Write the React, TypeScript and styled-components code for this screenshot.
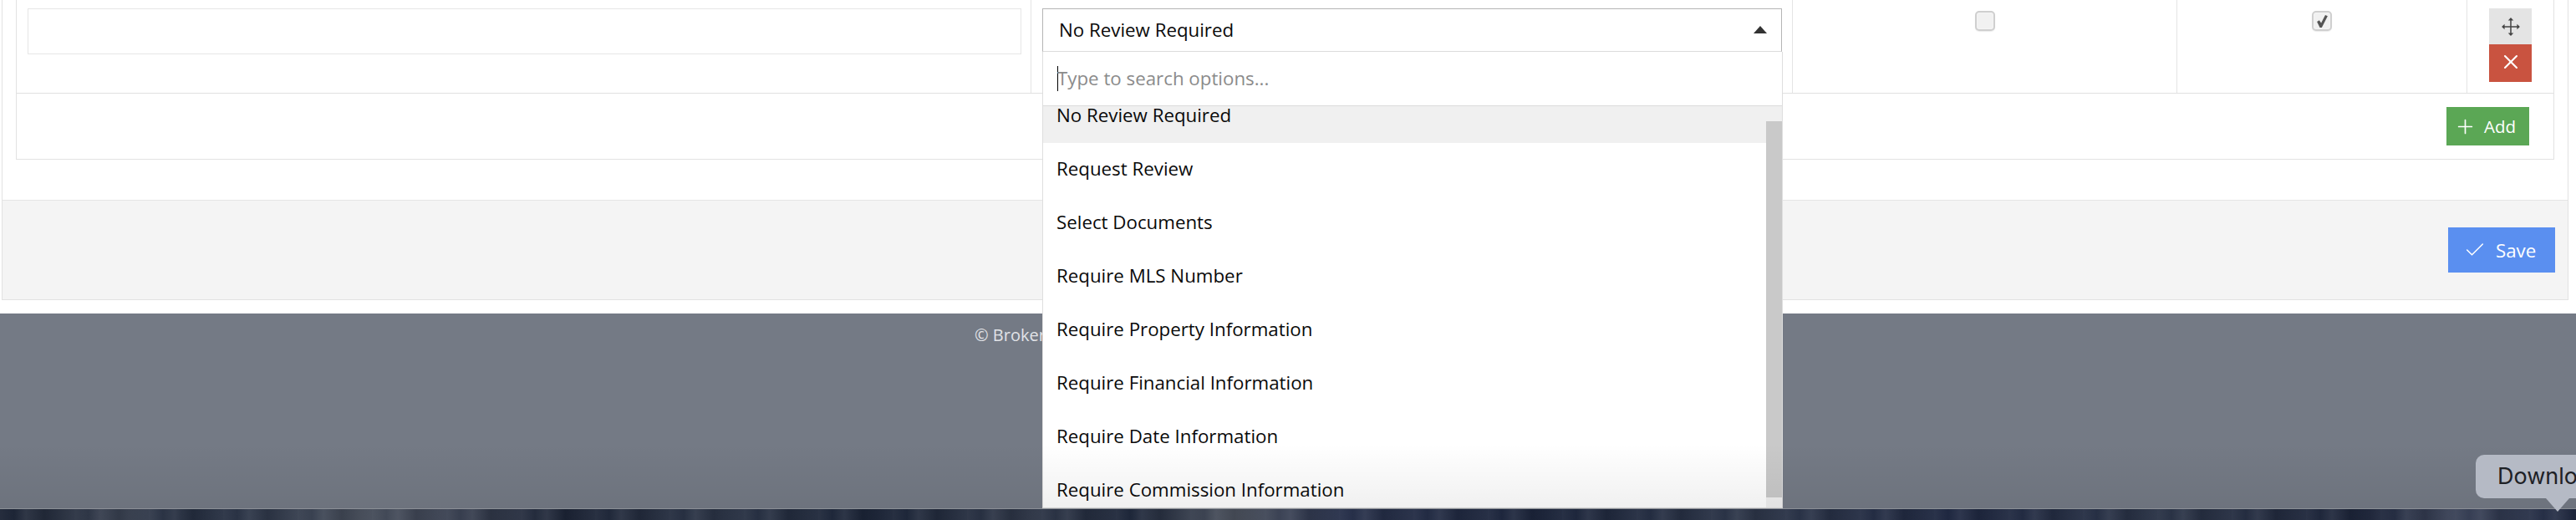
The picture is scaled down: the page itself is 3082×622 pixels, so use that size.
import styled, { createGlobalStyle } from 'styled-components';
import { Check, Plus, X } from 'lucide-react';

const GlobalStyle = createGlobalStyle`
  html, body {
    margin: 0;
    padding: 0;
    background: #fff;
  }
  body {
    font-family: "Open Sans", "Liberation Sans", sans-serif;
    color: #0a0a0a;
  }
  * {
    box-sizing: border-box;
  }
`;

const Page = styled.div`
  position: relative;
  display: flex;
  flex-direction: column;
  width: 3082px;
  height: 622px;
  overflow: hidden;
`;

const Panel = styled.section`
  width: 3071px;
  margin-left: 2px;
  border: 1px solid #e2e2e2;
  border-top: none;
`;

const PanelBody = styled.div`
  padding: 0 16px 48px;
`;

const TableFrame = styled.div`
  border: 1px solid #e2e2e2;
  border-top: none;
`;

const Row = styled.div`
  display: grid;
  grid-template-columns: 1214px 911px 460px 347px 103px;
  height: 112px;
  border-bottom: 1px solid #e0e0e0;
`;

const Cell = styled.div`
  position: relative;
  border-right: 1px solid #e4e4e4;
  &:last-child {
    border-right: none;
  }
`;

const NameCell = styled(Cell)`
  padding: 10px 11px 0 13px;
`;

const SelectCell = styled(Cell)`
  padding: 10px 12px 0 13px;
`;

const CheckCell = styled(Cell)`
  display: flex;
  justify-content: center;
  padding-top: 13px;
`;

const ActionCell = styled(Cell)`
  display: flex;
  flex-direction: column;
  align-items: center;
  padding-top: 10px;
`;

const NameInput = styled.input`
  display: block;
  width: 100%;
  height: 55px;
  border: 1px solid #e6e6e6;
  background: #fff;
  outline: none;
`;

const SelectBox = styled.div`
  display: flex;
  align-items: center;
  justify-content: space-between;
  height: 52px;
  padding: 0 17px 2px 19px;
  border: 1px solid #b5b5b5;
  border-bottom-color: #dcdcdc;
  font-size: 22.3px;
`;

const CaretUp = styled.span`
  width: 0;
  height: 0;
  border-left: 8px solid transparent;
  border-right: 8px solid transparent;
  border-bottom: 9px solid #333;
`;

const Dropdown = styled.div`
  position: absolute;
  z-index: 5;
  top: 62px;
  left: 13px;
  display: flex;
  flex-direction: column;
  width: 886px;
  height: 546px;
  border: 1px solid #dedede;
  border-top: none;
  background: #fff;
`;

const SearchRow = styled.div`
  flex: none;
  display: flex;
  align-items: center;
  height: 65px;
  padding: 0 0 0 17px;
  border-bottom: 1px solid #dcdcdc;
`;

const TextCaret = styled.span`
  width: 1px;
  height: 30px;
  margin-right: -1px;
  background: #000;
`;

const SearchInput = styled.input`
  flex: 1;
  margin-top: -2px;
  border: none;
  outline: none;
  padding: 0;
  font-family: inherit;
  font-size: 22.3px;
  background: transparent;
  &::placeholder {
    color: #8b8b8b;
    opacity: 1;
  }
`;

const OptionViewport = styled.div`
  position: relative;
  flex: 1;
  overflow: hidden;
`;

const OptionList = styled.ul`
  list-style: none;
  margin: -20px 0 0;
  padding: 0;
`;

const Option = styled.li<{ $active?: boolean }>`
  display: flex;
  align-items: center;
  height: 64px;
  padding: 0 0 3px 16px;
  font-size: 22.3px;
  background: ${(p) => (p.$active ? '#f0f0f0' : 'transparent')};
`;

const ScrollTrack = styled.div`
  position: absolute;
  top: 0;
  right: 0;
  bottom: 0;
  width: 19px;
  padding-top: 18px;
  background: #f0f0f0;
`;

const ScrollThumb = styled.div`
  height: 450px;
  background: #c9c9c9;
`;

const CheckBox = styled.span`
  display: flex;
  align-items: center;
  justify-content: center;
  width: 24px;
  height: 24px;
  border: 2px solid #cfcfcf;
  border-radius: 5px;
  background: #f1f1f1;
  box-shadow: 0 1px 1px rgba(0, 0, 0, 0.08), inset 0 0 2px #fff;
  color: #555;
`;

const MoveButton = styled.button`
  display: flex;
  align-items: center;
  justify-content: center;
  width: 51px;
  height: 43px;
  border: none;
  padding: 0;
  background: #e4e4e4;
  color: #444;
`;

const DeleteButton = styled(MoveButton)`
  height: 45px;
  padding-bottom: 3px;
  background: #c95340;
  color: #fff;
`;

const AddRow = styled.div`
  display: flex;
  justify-content: flex-end;
  height: 78px;
  padding: 16px 29px 0 0;
`;

const AddButton = styled.button`
  display: flex;
  align-items: center;
  gap: 9px;
  width: 99px;
  height: 46px;
  padding: 0 0 0 9px;
  border: none;
  background: #5ba755;
  color: #fff;
  font-family: inherit;
  font-size: 20.5px;
`;

const PanelFooter = styled.div`
  display: flex;
  justify-content: flex-end;
  height: 119px;
  padding: 32px 15px 0 0;
  border-top: 1px solid #e5e5e5;
  background: #f4f4f4;
`;

const SaveButton = styled.button`
  display: flex;
  align-items: center;
  gap: 11px;
  width: 128px;
  height: 54px;
  padding: 0 0 0 18px;
  border: none;
  background: #5a8ff0;
  color: #fff;
  font-family: inherit;
  font-size: 22.3px;
`;

const SiteFooter = styled.footer`
  flex: none;
  height: 233px;
  margin-top: 16px;
  padding: 12px 0 0 1166px;
  background: #747a85;
  color: #e1e3e7;
  font-size: 20px;
  white-space: nowrap;
`;

const DesktopBand = styled.div`
  flex: 1;
  border-top: 1px solid #8b8f96;
  background:
    repeating-linear-gradient(
      90deg,
      rgba(255, 255, 255, 0.05) 0,
      rgba(255, 255, 255, 0) 17px,
      rgba(255, 255, 255, 0.07) 31px,
      rgba(0, 0, 0, 0.1) 53px,
      rgba(255, 255, 255, 0.04) 89px
    ),
    linear-gradient(
      90deg,
      #1a2233 0,
      #2b3343 3%,
      #3a4252 5%,
      #232c3e 7%,
      #2c3547 10%,
      #454c59 14%,
      #3d4454 17%,
      #1c2436 22%,
      #2a3345 28%,
      #1a2336 34%,
      #2e3647 40%,
      #1d2639 44%,
      #4a505c 48%,
      #27304a 52%,
      #1b243a 60%,
      #2c3548 68%,
      #1e2740 76%,
      #2a3346 84%,
      #1b2338 92%,
      #3b4358 95%,
      #1f2840 100%
    );
`;

const DockShade = styled.div`
  position: absolute;
  z-index: 6;
  left: 0;
  right: 0;
  top: 530px;
  height: 78px;
  background: linear-gradient(180deg, rgba(0, 0, 0, 0), rgba(0, 0, 0, 0.06));
  pointer-events: none;
`;

const DockTooltip = styled.div`
  position: absolute;
  z-index: 7;
  top: 544px;
  left: 2962px;
  display: flex;
  align-items: center;
  width: 200px;
  height: 52px;
  padding: 0 0 2px 26px;
  border-radius: 10px;
  background: #b5bac5;
  color: #1e2126;
  font-family: Inter, "Liberation Sans", sans-serif;
  font-size: 27px;
  white-space: nowrap;
  &::after {
    content: '';
    position: absolute;
    top: 52px;
    left: 84px;
    width: 28px;
    height: 16px;
    background: #b5bac5;
    clip-path: polygon(0 0, 100% 0, 50% 100%);
  }
`;

const reviewOptions = [
  'No Review Required',
  'Request Review',
  'Select Documents',
  'Require MLS Number',
  'Require Property Information',
  'Require Financial Information',
  'Require Date Information',
  'Require Commission Information',
];

function MoveIcon() {
  return (
    <svg width="24" height="24" viewBox="0 0 22 22" fill="currentColor">
      <path d="M10.3 3h1.4v16h-1.4zM3 10.3h16v1.4H3z" />
      <path d="M11 1l3 3.2H8zM11 21l3-3.2H8zM1 11l3.2-3v6zM21 11l-3.2-3v6z" />
    </svg>
  );
}

function TickIcon() {
  return (
    <svg width="17" height="17" viewBox="0 0 16 16" fill="currentColor">
      <path d="M2 8.5 4.5 6.8 6.7 9.8 11.3 1 14 2.2 7.4 15 5.2 15z" />
    </svg>
  );
}

function App() {
  return (
    <Page>
      <GlobalStyle />
      <Panel>
        <PanelBody>
          <TableFrame>
            <Row>
              <NameCell>
                <NameInput readOnly />
              </NameCell>
              <SelectCell>
                <SelectBox>
                  No Review Required
                  <CaretUp />
                </SelectBox>
                <Dropdown>
                  <SearchRow>
                    <TextCaret />
                    <SearchInput placeholder="Type to search options..." readOnly />
                  </SearchRow>
                  <OptionViewport>
                    <OptionList>
                      {reviewOptions.map((option, index) => (
                        <Option key={option} $active={index === 0}>
                          {option}
                        </Option>
                      ))}
                    </OptionList>
                    <ScrollTrack>
                      <ScrollThumb />
                    </ScrollTrack>
                  </OptionViewport>
                </Dropdown>
              </SelectCell>
              <CheckCell>
                <CheckBox />
              </CheckCell>
              <CheckCell>
                <CheckBox>
                  <TickIcon />
                </CheckBox>
              </CheckCell>
              <ActionCell>
                <MoveButton>
                  <MoveIcon />
                </MoveButton>
                <DeleteButton>
                  <X size={28} strokeWidth={1.8} />
                </DeleteButton>
              </ActionCell>
            </Row>
            <AddRow>
              <AddButton>
                <Plus size={27} strokeWidth={1.5} />
                Add
              </AddButton>
            </AddRow>
          </TableFrame>
        </PanelBody>
        <PanelFooter>
          <SaveButton>
            <Check size={28} strokeWidth={1.3} />
            Save
          </SaveButton>
        </PanelFooter>
      </Panel>
      <SiteFooter>© Broker</SiteFooter>
      <DesktopBand />
      <DockShade />
      <DockTooltip>Download</DockTooltip>
    </Page>
  );
}

export default App;
